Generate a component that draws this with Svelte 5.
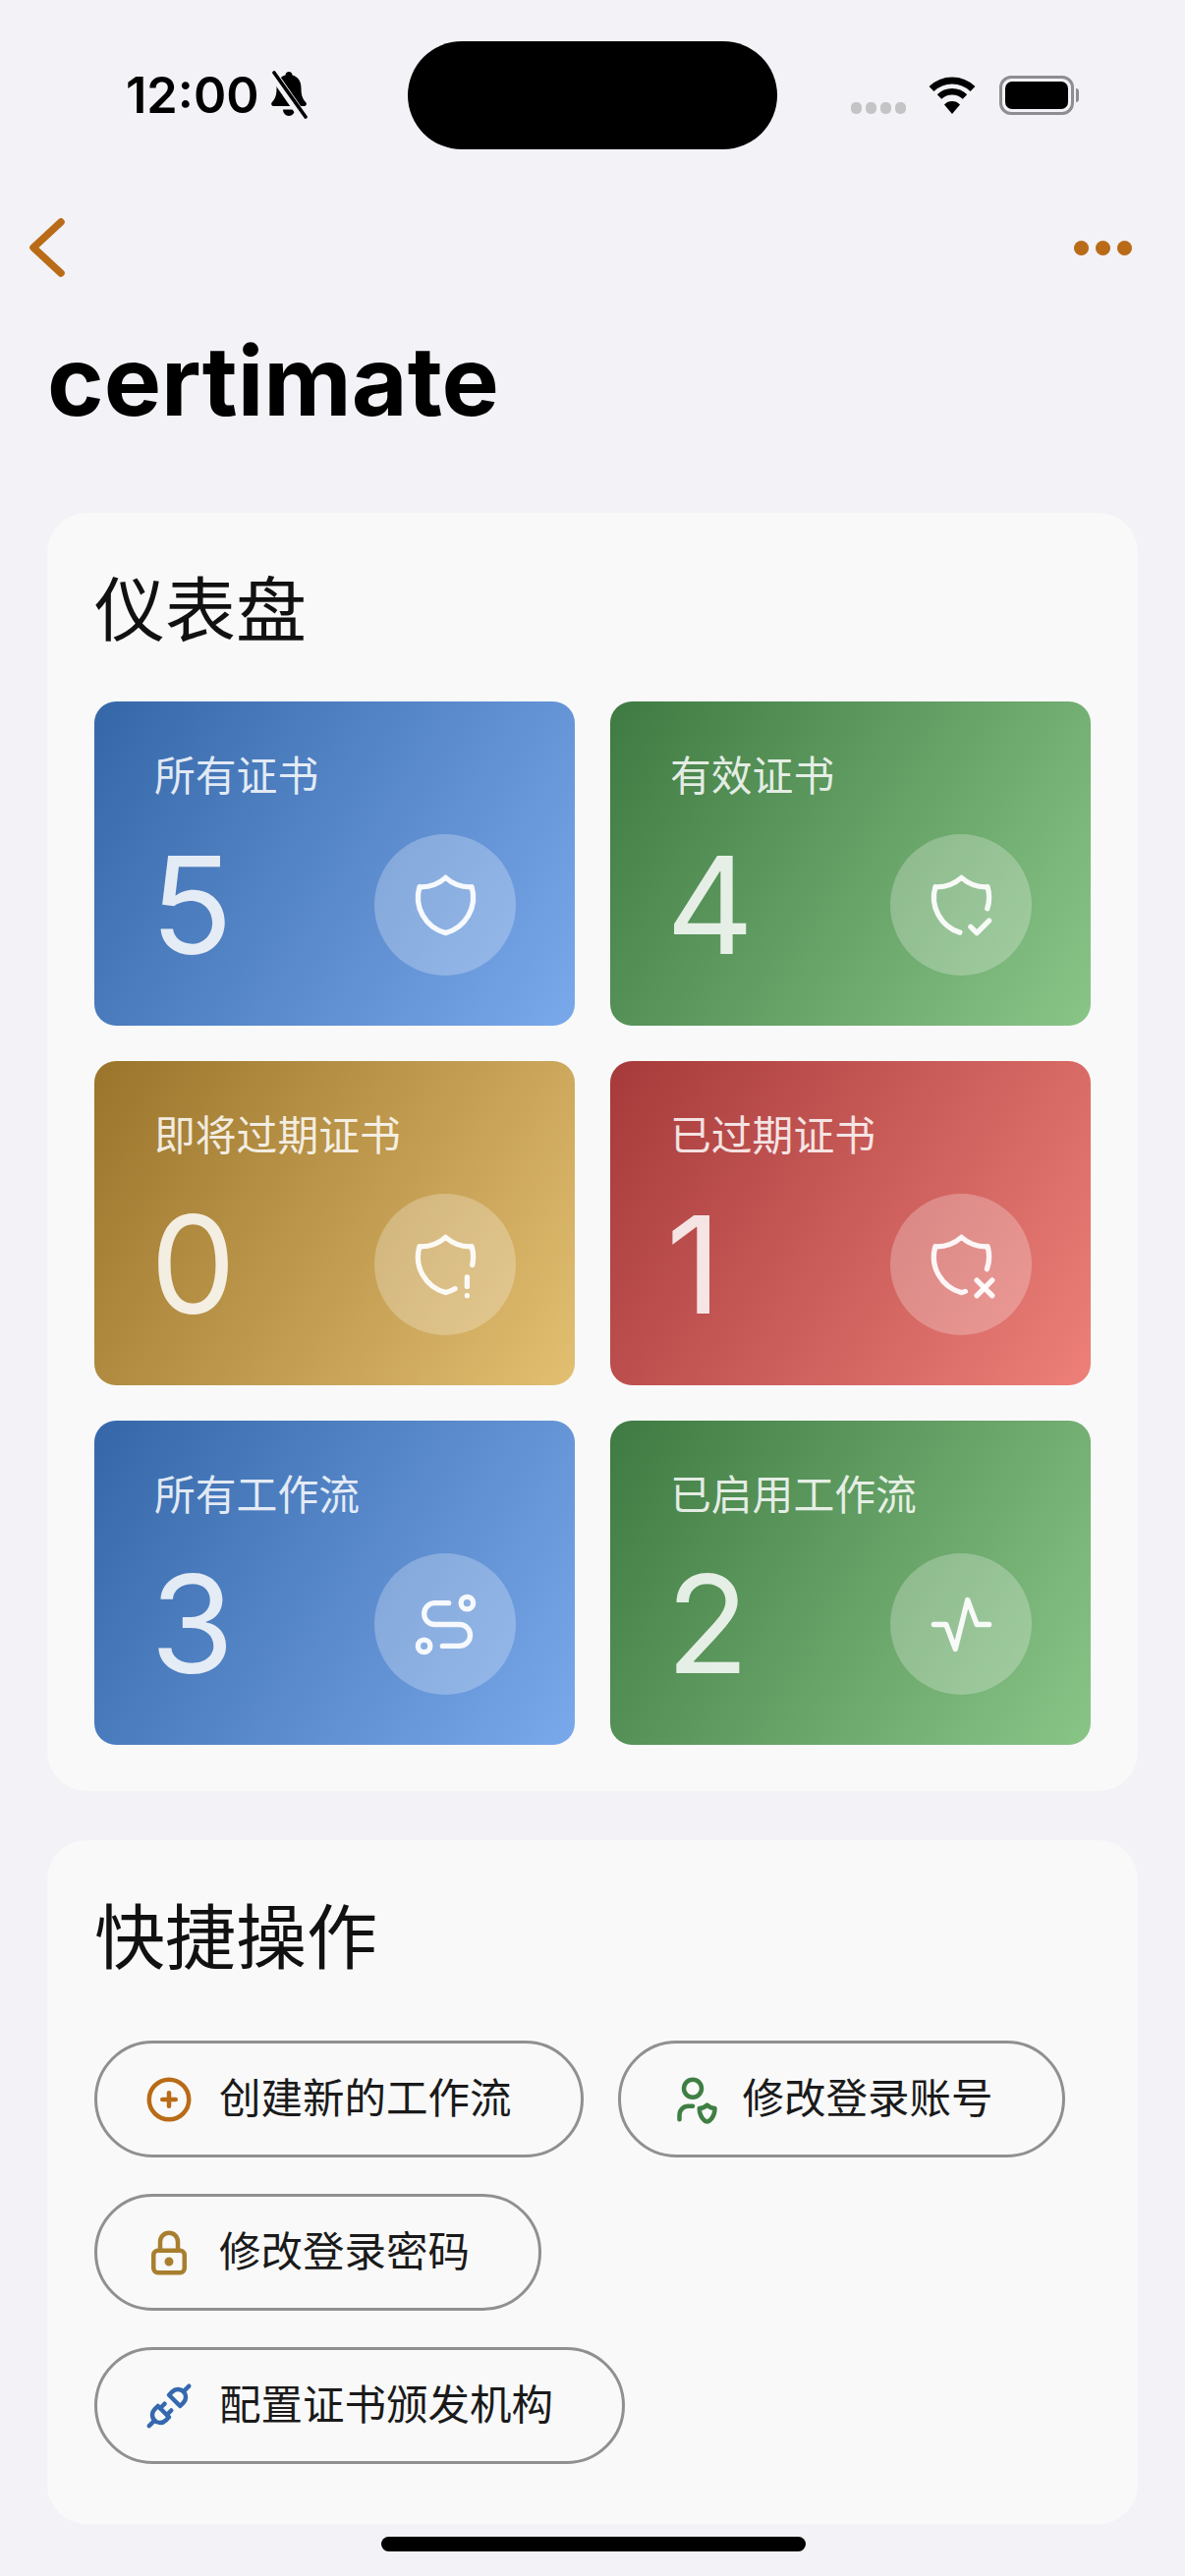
<script>
  const shield = 'M12 3a12 12 0 0 0 8.5 3a12 12 0 0 1 -8.5 15a12 12 0 0 1 -8.5 -15a12 12 0 0 0 8.5 -3';

  const stats = [
    { label: '所有证书', value: 5, tone: 'blue', icon: [shield] },
    {
      label: '有效证书', value: 4, tone: 'green',
      icon: ['M11.46 20.846a12 12 0 0 1 -7.96 -14.846a12 12 0 0 0 8.5 -3a12 12 0 0 0 8.5 3a12 12 0 0 1 -.09 7.06', 'M15 19l2 2l4 -4']
    },
    {
      label: '即将过期证书', value: 0, tone: 'gold',
      icon: ['M15.04 19.745c-.942 .551 -1.964 .976 -3.04 1.255a12 12 0 0 1 -8.5 -15a12 12 0 0 0 8.5 -3a12 12 0 0 0 8.5 3a12 12 0 0 1 .195 6.015', 'M19 16v3', 'M19 22v.01']
    },
    {
      label: '已过期证书', value: 1, tone: 'red',
      icon: ['M13.252 20.601c-.408 .155 -.826 .288 -1.252 .399a12 12 0 0 1 -8.5 -15a12 12 0 0 0 8.5 -3a12 12 0 0 0 8.5 3a12 12 0 0 1 -.19 7.357', 'M22 22l-5 -5', 'M17 22l5 -5']
    },
    {
      label: '所有工作流', value: 3, tone: 'blue',
      icon: ['M3 19a2 2 0 1 0 4 0a2 2 0 0 0 -4 0', 'M19 7a2 2 0 1 0 0 -4a2 2 0 0 0 0 4z', 'M11 19h5.5a3.5 3.5 0 0 0 0 -7h-8a3.5 3.5 0 0 1 0 -7h4.5']
    },
    { label: '已启用工作流', value: 2, tone: 'green', icon: ['M3 12h4l3 8l4 -16l3 8h4'] }
  ];

  const actions = [
    { label: '创建新的工作流', color: '#b96b17', icon: ['M3 12a9 9 0 1 0 18 0a9 9 0 0 0 -18 0', 'M9 12h6', 'M12 9v6'] },
    {
      label: '修改登录账号', color: '#3f7f44',
      icon: ['M6 21v-2a4 4 0 0 1 4 -4h2', 'M22 16c0 4 -2.5 6 -3.5 6s-3.5 -2 -3.5 -6c1 0 2.5 -.5 3.5 -1.5c1 1 2.5 1.5 3.5 1.5z', 'M8 7a4 4 0 1 0 8 0a4 4 0 0 0 -8 0']
    },
    {
      label: '修改登录密码', color: '#a87f2f',
      icon: ['M5 13a2 2 0 0 1 2 -2h10a2 2 0 0 1 2 2v6a2 2 0 0 1 -2 2h-10a2 2 0 0 1 -2 -2v-6z', 'M11 16a1 1 0 1 0 2 0a1 1 0 0 0 -2 0', 'M8 11v-4a4 4 0 1 1 8 0v4']
    },
    {
      label: '配置证书颁发机构', color: '#3568ae',
      icon: ['M7 12l5 5l-1.5 1.5a3.536 3.536 0 1 1 -5 -5l1.5 -1.5z', 'M17 12l-5 -5l1.5 -1.5a3.536 3.536 0 1 1 5 5l-1.5 1.5z', 'M3 21l2.5 -2.5', 'M18.5 5.5l2.5 -2.5', 'M10 11l-2 2', 'M13 14l-2 2']
    }
  ];
</script>

{#snippet tabler(paths, size, stroke, color)}
  <svg width={size} height={size} viewBox="0 0 24 24" fill="none" stroke={color} stroke-width={stroke} stroke-linecap="round" stroke-linejoin="round">
    {#each paths as d}
      <path {d} />
    {/each}
  </svg>
{/snippet}

<div class="screen">
  <div class="status">
    <div class="status__left">
      <span class="status__time">12:00</span>
      <svg class="status__bell" width="40" height="50" viewBox="0 0 40 50">
        <path d="M20 1c-2 0-3.500 1.500-3.500 3.500C10 6.500 7.500 11 7.500 18c0 8-2 11-5 14.500-1 1.500 0 3.500 2 3.500h31c2 0 3-2 2-3.500-3-3.500-5-6.500-5-14.500 0-7-2.500-11.500-9-13.500C23.500 2.500 22 1 20 1z" />
        <path d="M14 39.500h12c0 3.500-2.500 6.500-6 6.500s-6-3-6-6.500z" />
        <path d="M3 2 L35 48" stroke="#f2f2f7" stroke-width="9" />
        <path d="M5 2 L37 47" stroke="#000" stroke-width="3.600" stroke-linecap="round" />
      </svg>
    </div>
    <div class="status__island"></div>
    <div class="status__right">
      <div class="status__signal">
        <i></i><i></i><i></i><i></i>
      </div>
      <svg width="50" height="40" viewBox="0 0 50 40" fill="none" stroke="#000">
        <path d="M4 13.500 A30 30 0 0 1 46 13.500" stroke-width="7" />
        <path d="M12 21.500 A19 19 0 0 1 38 21.500" stroke-width="6.500" />
        <path d="M25 39 L17 29.500 A11 11 0 0 1 33 29.500 Z" fill="#000" stroke="none" />
      </svg>
      <div class="status__battery">
        <div class="status__cell"><div></div></div>
        <span class="status__cap"></span>
      </div>
    </div>
  </div>

  <nav class="nav">
    <svg width="40" height="60" viewBox="0 0 40 60" fill="none" stroke="#b96b17" stroke-width="7.500" stroke-linecap="round" stroke-linejoin="round">
      <path d="M34 4 L6 30 L34 56" />
    </svg>
    <div class="nav__dots"><i></i><i></i><i></i></div>
  </nav>

  <h1 class="title">certimate</h1>

  <section class="card">
    <h2 class="card__title">仪表盘</h2>
    <div class="stats">
      {#each stats as stat}
        <div class="stat stat--{stat.tone}">
          <p class="stat__label">{stat.label}</p>
          <div class="stat__row">
            <span class="stat__value">{stat.value}</span>
            <span class="stat__badge">
              {@render tabler(stat.icon, 75, 1.7, 'rgba(255,255,255,0.92)')}
            </span>
          </div>
        </div>
      {/each}
    </div>
  </section>

  <section class="card card--actions">
    <h2 class="card__title">快捷操作</h2>
    <div class="actions">
      {#each actions as action}
        <button class="action">
          {@render tabler(action.icon, 54, 2, action.color)}
          <span class="action__label">{action.label}</span>
        </button>
      {/each}
    </div>
  </section>

  <div class="home"></div>
</div>

<style>
:global(body) {
  margin: 0;
  background: #f2f2f7;
}

.screen {
  width: 1206px;
  height: 2622px;
  overflow: hidden;
  background: #f2f2f7;
  font-family: "Inter", "Noto Sans CJK SC", sans-serif;
  color: #000;
}

/* barra de estado */
.status {
  display: flex;
  align-items: center;
  height: 110px;
  padding-top: 42px;
}

.status__left {
  display: flex;
  align-items: center;
  gap: 10px;
  width: 415px;
  box-sizing: border-box;
  padding-left: 128px;
}

.status__time {
  font-size: 50.5px;
  font-weight: 600;
  line-height: 60px;
}

.status__island {
  width: 376px;
  height: 110px;
  border-radius: 55px;
  background: #000;
}

.status__right {
  display: flex;
  align-items: center;
  padding-left: 75px;
}

.status__signal {
  display: flex;
  gap: 4px;
  margin-top: 26px;
  margin-right: 22px;
}

.status__signal i {
  width: 11px;
  height: 12px;
  border-radius: 5px;
  background: #c4c4c6;
}

.status__battery {
  display: flex;
  align-items: center;
  gap: 2px;
  margin-left: 23px;
}

.status__cell {
  width: 76px;
  height: 40px;
  box-sizing: border-box;
  padding: 3px;
  border: 3px solid #8e8e90;
  border-radius: 12px;
}

.status__cell div {
  height: 100%;
  border-radius: 7px;
  background: #000;
}

.status__cap {
  width: 3px;
  height: 14px;
  border-radius: 0 3px 3px 0;
  background: #8e8e90;
}

/* navegación */
.nav {
  display: flex;
  justify-content: space-between;
  align-items: center;
  height: 60px;
  margin-top: 70px;
  padding: 0 54px 0 28px;
}

.nav__dots {
  display: flex;
  gap: 7px;
}

.nav__dots i {
  width: 15px;
  height: 15px;
  border-radius: 50%;
  background: #b96b17;
}

.title {
  margin: 46px 0 74px 48px;
  font-size: 98px;
  font-weight: 700;
  line-height: 120px;
}

/* tarjetas */
.card {
  width: 1110px;
  margin-left: 48px;
  margin-bottom: 50px;
  box-sizing: border-box;
  padding: 54px 47px 47px 48px;
  border-radius: 40px;
  background: #f9f9f9;
}

.card--actions {
  padding-bottom: 61px;
}

.card__title {
  margin: 0 0 48px;
  font-size: 72px;
  font-weight: 400;
  line-height: 90px;
  color: #111;
}

.card--actions .card__title {
  margin-bottom: 60px;
}

.stats {
  display: grid;
  grid-template-columns: 489px 489px;
  gap: 36px;
}

.stat {
  height: 330px;
  box-sizing: border-box;
  padding: 50px 60px 51px 61px;
  border-radius: 22px;
  color: rgba(255, 255, 255, 0.85);
}

.stat--blue { background: linear-gradient(122deg, #3567a8, #7aa9eb); }
.stat--green { background: linear-gradient(122deg, #3f7a42, #8ac588); }
.stat--gold { background: linear-gradient(122deg, #9a742a, #e3bf72); }
.stat--red { background: linear-gradient(122deg, #a63a3a, #ee8079); }

.stat__label {
  margin: 0;
  font-size: 41.8px;
  line-height: 52px;
}

.stat__row {
  display: flex;
  justify-content: space-between;
  align-items: center;
  margin-top: 33px;
}

.stat__value {
  margin-left: -4px;
  font-size: 138px;
  font-weight: 400;
  line-height: 144px;
}

.stat__badge {
  display: flex;
  justify-content: center;
  align-items: center;
  width: 144px;
  height: 144px;
  border-radius: 50%;
  background: rgba(255, 255, 255, 0.25);
}

.actions {
  display: flex;
  flex-wrap: wrap;
  gap: 37px 35px;
}

.action {
  display: flex;
  align-items: center;
  gap: 24px;
  height: 119px;
  box-sizing: border-box;
  padding: 0 70px 0 46px;
  border: 3px solid #909090;
  border-radius: 60px;
  background: transparent;
  font-family: inherit;
  font-size: 42.5px;
  color: #1a1a1a;
}

.action__label {
  margin-top: -9px;
}

.home {
  width: 432px;
  height: 15px;
  margin: -37px 0 0 388px;
  border-radius: 8px;
  background: #000;
}
</style>
